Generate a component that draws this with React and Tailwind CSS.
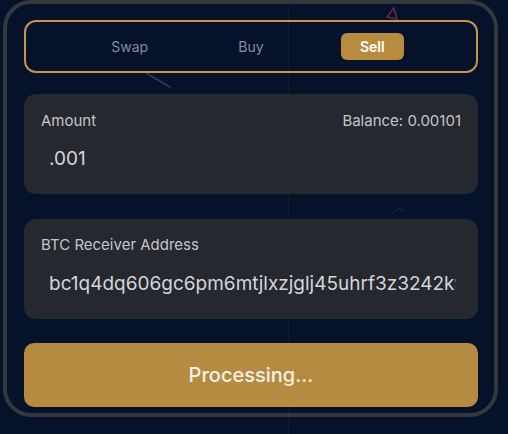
import React, { useState } from 'react';

const tabs = ['Swap', 'Buy', 'Sell'];

// Faint decorative shapes from the page background
const Backdrop = () => (
    <svg className="absolute inset-0 pointer-events-none" width="508" height="434" viewBox="0 0 508 434">
        <line x1="288.5" y1="0" x2="288.5" y2="434" stroke="#0f1b30" strokeWidth="1" />
        <line x1="146" y1="73" x2="170" y2="87" stroke="#2c3b52" strokeWidth="2" strokeLinecap="round" />
        <path d="M387 17 L394 8 L397 19 Z" fill="none" stroke="#6e2748" strokeWidth="1.5" />
        <path d="M392 214 Q398 205 404 212" fill="none" stroke="#142238" strokeWidth="1.5" />
    </svg>
);

const App = () => {
    const [active, setActive] = useState('Sell');
    const [amount, setAmount] = useState('.001');
    const [address, setAddress] = useState('bc1q4dq606gc6pm6mtjlxzjglj45uhrf3z3242k9xd7v0qx');

    return (
        <div
            className="relative w-[508px] h-[434px] overflow-hidden bg-[#06112a]"
            style={{ fontFamily: 'Inter, "Noto Sans", sans-serif' }}
        >
            <Backdrop />

            <div className="relative ml-[3px] w-[495px] h-[417px] border-4 border-[#34373b] rounded-[28px] pl-[17px] pr-[16px] pt-[16px]">
                {/* Tabs */}
                <div className="h-[53px] border-2 border-[#c4954a] rounded-xl grid grid-cols-3 items-center px-[43px]">
                    {tabs.map((tab) => (
                        <div key={tab} className="flex justify-center">
                            <button
                                onClick={() => setActive(tab)}
                                className={
                                    active === tab
                                        ? 'w-[63px] h-[27px] rounded-md bg-[#b78c41] text-white text-[14px] font-semibold'
                                        : 'h-[27px] text-[14px] text-[#858d9b]'
                                }
                            >
                                {tab}
                            </button>
                        </div>
                    ))}
                </div>

                {/* Amount */}
                <div className="mt-[21px] h-[100px] rounded-xl bg-[#25282e] px-[17px] pt-[17px]">
                    <div className="flex items-center justify-between text-[15px] text-[#c3c6cb] leading-[20px]">
                        <span>Amount</span>
                        <span>Balance: 0.00101</span>
                    </div>
                    <input
                        value={amount}
                        onChange={(e) => setAmount(e.target.value)}
                        className="mt-[15px] w-full bg-transparent outline-none pl-2 pr-[5px] text-[19px] leading-[26px] text-[#d4d6da]"
                    />
                </div>

                {/* Address */}
                <div className="mt-[25px] h-[100px] rounded-xl bg-[#25282e] px-[17px] pt-[16px]">
                    <div className="text-[15px] text-[#c3c6cb] leading-[20px]">BTC Receiver Address</div>
                    <input
                        value={address}
                        onChange={(e) => setAddress(e.target.value)}
                        className="mt-[16px] w-full bg-transparent outline-none pl-2 pr-[5px] text-[19px] leading-[26px] text-[#d4d6da]"
                    />
                </div>

                {/* Submit */}
                <button className="mt-[24px] w-full h-[64px] rounded-[10px] bg-[#b58b41] text-[20px] font-medium text-[#f6f1e6]">
                    Processing...
                </button>
            </div>
        </div>
    );
};

export default App;
